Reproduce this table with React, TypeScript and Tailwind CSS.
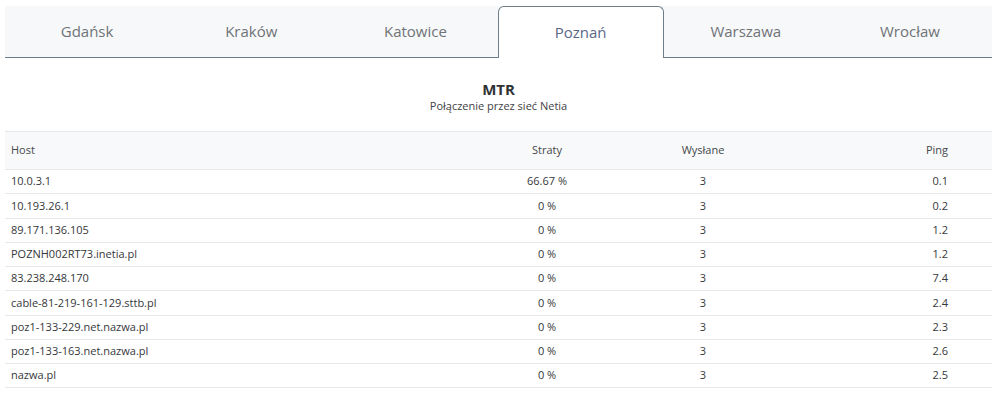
import React from "react";

const tabs = ["Gdańsk", "Kraków", "Katowice", "Poznań", "Warszawa", "Wrocław"];
const rows: [string, string, string, string][] = [
  ["10.0.3.1", "66.67 %", "3", "0.1"],
  ["10.193.26.1", "0 %", "3", "0.2"],
  ["89.171.136.105", "0 %", "3", "1.2"],
  ["POZNH002RT73.inetia.pl", "0 %", "3", "1.2"],
  ["83.238.248.170", "0 %", "3", "7.4"],
  ["cable-81-219-161-129.sttb.pl", "0 %", "3", "2.4"],
  ["poz1-133-229.net.nazwa.pl", "0 %", "3", "2.3"],
  ["poz1-133-163.net.nazwa.pl", "0 %", "3", "2.6"],
  ["nazwa.pl", "0 %", "3", "2.5"],
];

export default function App() {
  return (
    <div
      className="w-[1000px] h-[396px] bg-white overflow-hidden pt-[6px] px-[5px]"
      style={{ fontFamily: '"Open Sans", "Noto Sans", sans-serif' }}
    >
      <div className="w-[987px] flex h-[52px] bg-[#f6f8fa] border-b border-[#6e7d88]">
        {tabs.map((t) =>
          t === "Poznań" ? (
            <div
              key={t}
              className="flex-1 flex items-center justify-center bg-white border border-b-0 border-[#6e7d88] rounded-t-[6px] -mb-px text-[15px] text-[#5a6888]"
            >
              {t}
            </div>
          ) : (
            <div
              key={t}
              className="flex-1 flex items-center justify-center text-[15px] text-[#707377]"
            >
              {t}
            </div>
          )
        )}
      </div>
      <div className="w-[987px] flex flex-col items-center pt-[22px] h-[73px]">
        <div className="text-[15px] font-bold leading-[18px] text-[#2f3336]">MTR</div>
        <div className="text-[11px] leading-[16px] text-[#3f4245]">Połączenie przez sieć Netia</div>
      </div>
      <div className="w-[987px] text-[11px] text-[#35373a]">
        <div className="grid grid-cols-[482px_120px_192px_1fr] h-[39px] items-center bg-[#f8f9fa] border-t border-b border-[#e6e8ea] text-[#45484b]">
          <div className="pl-[6px]">Host</div>
          <div className="text-center">Straty</div>
          <div className="text-center">Wysłane</div>
          <div className="text-right pr-[44px]">Ping</div>
        </div>
        {rows.map((r) => (
          <div
            key={r[0]}
            className="grid grid-cols-[482px_120px_192px_1fr] h-[24.25px] items-center border-b border-[#e6e8ea]"
          >
            <div className="pl-[6px]">{r[0]}</div>
            <div className="text-center">{r[1]}</div>
            <div className="text-center">{r[2]}</div>
            <div className="text-right pr-[44px]">{r[3]}</div>
          </div>
        ))}
      </div>
    </div>
  );
}
